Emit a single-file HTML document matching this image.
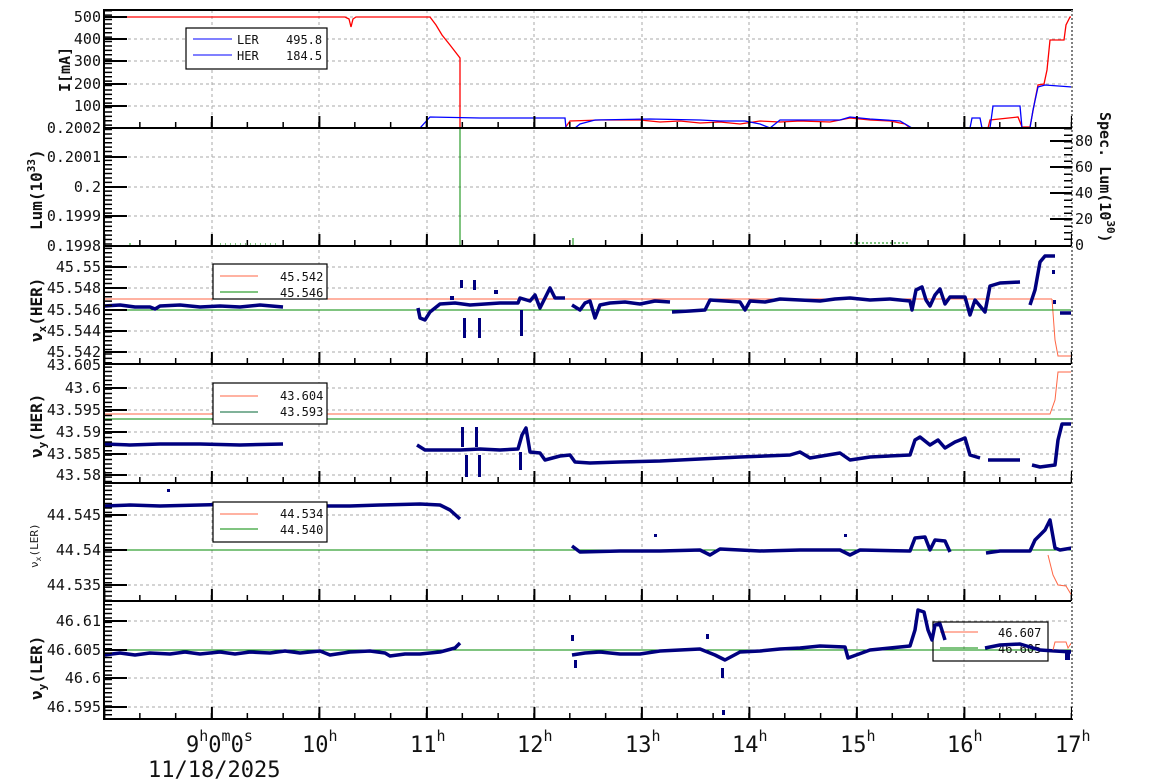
<!DOCTYPE html>
<html><head><meta charset="utf-8"><style>
html,body{margin:0;padding:0;background:#fff}
svg{display:block;font-family:"DejaVu Sans Mono","Liberation Mono",monospace}
.t{font-size:15px;fill:#111}
.b{font-weight:bold}
</style></head><body>
<svg width="1154" height="782" viewBox="0 0 1154 782" xmlns="http://www.w3.org/2000/svg">
<rect width="1154" height="782" fill="#fff"/>
<g stroke="#aaa" stroke-width="1" stroke-dasharray="3 3">
<line x1="212" y1="10" x2="212" y2="719"/><line x1="319" y1="10" x2="319" y2="719"/>
<line x1="427" y1="10" x2="427" y2="719"/><line x1="534" y1="10" x2="534" y2="719"/>
<line x1="642" y1="10" x2="642" y2="719"/><line x1="749" y1="10" x2="749" y2="719"/>
<line x1="857" y1="10" x2="857" y2="719"/><line x1="964" y1="10" x2="964" y2="719"/>
<line x1="104" y1="17" x2="1072" y2="17"/><line x1="104" y1="39" x2="1072" y2="39"/><line x1="104" y1="61" x2="1072" y2="61"/><line x1="104" y1="84" x2="1072" y2="84"/><line x1="104" y1="106" x2="1072" y2="106"/>
<line x1="104" y1="157" x2="1072" y2="157"/><line x1="104" y1="187" x2="1072" y2="187"/><line x1="104" y1="216" x2="1072" y2="216"/>
<line x1="104" y1="267" x2="1072" y2="267"/><line x1="104" y1="288" x2="1072" y2="288"/><line x1="104" y1="331" x2="1072" y2="331"/><line x1="104" y1="352" x2="1072" y2="352"/>
<line x1="104" y1="388" x2="1072" y2="388"/><line x1="104" y1="410" x2="1072" y2="410"/><line x1="104" y1="432" x2="1072" y2="432"/><line x1="104" y1="454" x2="1072" y2="454"/><line x1="104" y1="475" x2="1072" y2="475"/>
<line x1="104" y1="515" x2="1072" y2="515"/><line x1="104" y1="585" x2="1072" y2="585"/>
<line x1="104" y1="621" x2="1072" y2="621"/><line x1="104" y1="678" x2="1072" y2="678"/><line x1="104" y1="707" x2="1072" y2="707"/>
</g>

<!-- Panel 1 currents -->
<polyline fill="none" stroke="#f00" stroke-width="1.3" points="104,17 345,17 349,19 351,27 353,19 356,17 430,17 436,25 442,35 450,45 460,58 460,128 565,128 570,121 600,120 640,120 660,122 680,121 700,123 720,122 740,124 760,121 780,122 800,121 830,122 850,118 870,120 890,121 905,124 910,128 988,128 990,120 1018,117 1022,127 1030,127 1035,100 1038,85 1044,84 1047,70 1050,40 1064,40 1066,25 1070,17 1072,17"/>
<polyline fill="none" stroke="#00f" stroke-width="1.3" points="104,128 420,128 430,117 480,118 520,118 565,118 566,128 575,128 580,124 595,120 650,119 700,120 720,121 745,121 760,124 770,128 780,120 840,120 850,117 870,119 900,121 912,128 970,128 972,118 980,118 982,128 990,128 993,106 1020,106 1022,128 1030,128 1033,110 1038,87 1045,85 1072,87"/>
<rect x="186" y="28" width="141" height="41" fill="#fff" stroke="#000" stroke-width="1.2"/>
<line x1="193" y1="39" x2="232" y2="39" stroke="#00f"/><line x1="193" y1="55" x2="232" y2="55" stroke="#00f"/>
<text x="237" y="44" font-size="12" fill="#111">LER</text><text x="286" y="44" font-size="12" fill="#111">495.8</text>
<text x="237" y="60" font-size="12" fill="#111">HER</text><text x="286" y="60" font-size="12" fill="#111">184.5</text>

<!-- Panel 2 -->
<line x1="460" y1="128" x2="460" y2="246" stroke="#080" stroke-width="1"/>
<g stroke="#080" stroke-width="1"><line x1="130" y1="243" x2="130" y2="246"/><line x1="573" y1="238" x2="573" y2="246"/><line x1="850" y1="243" x2="910" y2="243" stroke-dasharray="2 2"/><line x1="220" y1="244" x2="280" y2="244" stroke-dasharray="1 4"/></g>

<!-- Panel 3 -->
<line x1="104" y1="299" x2="1052" y2="299" stroke="#f64" stroke-width="1"/>
<polyline fill="none" stroke="#f64" stroke-width="1" points="1052,299 1055,340 1058,356 1072,356"/>
<line x1="104" y1="310" x2="1072" y2="310" stroke="#080" stroke-width="1"/>
<g fill="none" stroke="#00007f" stroke-width="3.5" stroke-linejoin="round">
<polyline points="104,306 120,305 135,307 150,307 155,309 160,306 180,305 200,307 220,306 240,307 260,305 283,307"/>
<polyline points="418,308 420,318 425,320 430,312 440,304 455,303 470,305 485,304 500,303 518,303 520,298 530,301 535,295 540,308 545,298 550,288 555,298 565,298"/>
<polyline points="572,305 580,310 585,303 590,301 595,318 600,305 610,303 625,302 640,304 655,301 670,302"/>
<polyline points="672,312 690,311 705,310 710,300 725,301 740,302 745,310 750,301 765,302 780,299 800,300 820,301 835,299 850,298 870,300 890,299 910,301 912,310 916,290 922,287 926,300 930,306 935,295 940,289 945,304 950,297 965,297 970,315 975,300 985,312 990,286 1000,283 1020,282"/>
<polyline points="1030,305 1035,290 1040,262 1045,256 1055,256"/>
<polyline points="1060,313 1072,313"/>
</g>
<g fill="#00007f"><rect x="460" y="280" width="3" height="8"/><rect x="473" y="280" width="3" height="10"/><rect x="478" y="318" width="3" height="20"/><rect x="463" y="318" width="3" height="20"/><rect x="450" y="296" width="4" height="4"/><rect x="494" y="290" width="4" height="4"/><rect x="520" y="310" width="3" height="26"/><rect x="1052" y="270" width="3" height="4"/><rect x="1053" y="300" width="3" height="4"/></g>
<rect x="213" y="264" width="114" height="35" fill="#fff" stroke="#000" stroke-width="1.2"/>
<line x1="220" y1="276" x2="258" y2="276" stroke="#f64"/><line x1="220" y1="292" x2="258" y2="292" stroke="#080"/>
<text x="280" y="281" font-size="12" fill="#111">45.542</text><text x="280" y="297" font-size="12" fill="#111">45.546</text>

<!-- Panel 4 -->
<polyline fill="none" stroke="#f64" stroke-width="1" points="104,414 1050,414 1055,400 1058,372 1072,372"/>
<line x1="104" y1="419" x2="1072" y2="419" stroke="#080" stroke-width="1"/>
<g fill="none" stroke="#00007f" stroke-width="3.5" stroke-linejoin="round">
<polyline points="104,444 130,445 160,444 200,444 240,445 283,444"/>
<polyline points="417,445 425,450 445,450 460,450 480,449 500,450 518,449 522,435 526,428 530,452 540,453 545,460 560,456 570,455 575,462 590,463 620,462 660,461 700,459 740,457 790,455 800,452 810,458 840,453 850,460 870,457 910,455 915,440 920,437 930,445 938,440 945,448 955,442 965,438 970,455 980,458"/>
<polyline points="988,460 1020,460"/>
<polyline points="1032,465 1040,467 1055,465 1058,440 1062,424 1072,424"/>
</g>
<g fill="#00007f"><rect x="461" y="427" width="3" height="20"/><rect x="475" y="427" width="3" height="20"/><rect x="465" y="455" width="3" height="22"/><rect x="478" y="455" width="3" height="22"/><rect x="519" y="452" width="3" height="18"/></g>
<rect x="213" y="383" width="114" height="41" fill="#fff" stroke="#000" stroke-width="1.2"/>
<line x1="220" y1="396" x2="258" y2="396" stroke="#f64"/><line x1="220" y1="412" x2="258" y2="412" stroke="#063"/>
<text x="280" y="400" font-size="12" fill="#111">43.604</text><text x="280" y="416" font-size="12" fill="#111">43.593</text>

<!-- Panel 5 -->
<line x1="104" y1="550" x2="1072" y2="550" stroke="#080" stroke-width="1"/>
<polyline fill="none" stroke="#f64" stroke-width="1" points="1048,555 1053,575 1058,585 1066,586 1072,596"/>
<g fill="none" stroke="#00007f" stroke-width="3.5" stroke-linejoin="round">
<polyline points="104,506 130,505 160,506 200,505 240,504 280,505 300,505 320,506 350,506 380,505 420,504 440,505 450,510 460,519"/>
<polyline points="572,546 580,552 620,551 660,551 700,550 710,555 720,549 760,551 800,550 840,550 850,555 860,550 910,551 915,538 925,537 930,550 935,540 945,541 950,552"/>
<polyline points="986,553 1000,551 1030,551 1035,540 1045,530 1050,520 1055,548 1060,550 1072,548"/>
</g>
<rect x="167" y="489" width="3" height="3" fill="#00007f"/><rect x="654" y="534" width="3" height="3" fill="#00007f"/><rect x="844" y="534" width="3" height="3" fill="#00007f"/>
<rect x="213" y="502" width="114" height="40" fill="#fff" stroke="#000" stroke-width="1.2"/>
<line x1="220" y1="514" x2="258" y2="514" stroke="#f64"/><line x1="220" y1="529" x2="258" y2="529" stroke="#080"/>
<text x="280" y="518" font-size="12" fill="#111">44.534</text><text x="280" y="534" font-size="12" fill="#111">44.540</text>

<!-- Panel 6 -->
<line x1="104" y1="650" x2="1072" y2="650" stroke="#080" stroke-width="1"/>
<rect x="933" y="622" width="115" height="39" fill="none" stroke="#000" stroke-width="1.2"/>
<line x1="940" y1="632" x2="978" y2="632" stroke="#f64"/><line x1="940" y1="648" x2="978" y2="648" stroke="#080"/>
<text x="998" y="637" font-size="12" fill="#111">46.607</text><text x="998" y="653" font-size="12" fill="#111">46.605</text>
<g fill="none" stroke="#00007f" stroke-width="3.5" stroke-linejoin="round">
<polyline points="104,655 120,653 135,655 150,653 170,654 185,652 200,654 220,652 235,654 250,652 270,653 285,651 300,653 320,651 330,655 350,652 370,651 385,653 390,656 405,654 420,654 440,652 455,648 460,643"/>
<polyline points="572,655 585,653 600,652 620,654 640,654 660,651 680,650 700,649 715,655 725,660 740,652 760,651 780,649 800,648 820,646 845,647 848,658 870,650 890,648 910,646 915,630 918,610 924,612 928,630 932,640 935,625 940,624 945,640"/>
<polyline points="985,648 1000,645 1020,644 1040,650 1055,651 1072,652"/>
</g>
<g fill="#00007f"><rect x="571" y="635" width="3" height="6"/><rect x="574" y="660" width="3" height="8"/><rect x="706" y="634" width="3" height="5"/><rect x="721" y="668" width="3" height="10"/><rect x="722" y="710" width="3" height="5"/><rect x="1065" y="650" width="5" height="10"/></g>
<polyline fill="none" stroke="#f64" stroke-width="1" points="1053,650 1055,642 1066,642 1068,648 1072,642"/>

<g stroke="#000" stroke-width="2" fill="none">
<rect x="104" y="10" width="968" height="709"/>
<line x1="104" y1="128" x2="1072" y2="128"/><line x1="104" y1="246" x2="1072" y2="246"/>
<line x1="104" y1="364" x2="1072" y2="364"/><line x1="104" y1="483" x2="1072" y2="483"/>
<line x1="104" y1="601" x2="1072" y2="601"/>
</g>
<line x1="1072" y1="10" x2="1072" y2="719" stroke="#fff" stroke-width="2"/>
<line x1="1072" y1="10" x2="1072" y2="719" stroke="#000" stroke-width="1" stroke-dasharray="2 2"/>

<g stroke="#000" stroke-width="1.5">
<g stroke-dasharray="1.5 34.33" stroke-dashoffset="-35.1">
<line x1="104" y1="125" x2="1072" y2="125" stroke-width="6"/>
<line x1="104" y1="243" x2="1072" y2="243" stroke-width="6"/>
<line x1="104" y1="361" x2="1072" y2="361" stroke-width="6"/>
<line x1="104" y1="480" x2="1072" y2="480" stroke-width="6"/>
<line x1="104" y1="598" x2="1072" y2="598" stroke-width="6"/>
<line x1="104" y1="716" x2="1072" y2="716" stroke-width="6"/>
</g>
<g stroke-dasharray="2 105.5" stroke-dashoffset="-106.9">
<line x1="104" y1="122" x2="1072" y2="122" stroke-width="12"/>
<line x1="104" y1="240" x2="1072" y2="240" stroke-width="12"/>
<line x1="104" y1="358" x2="1072" y2="358" stroke-width="12"/>
<line x1="104" y1="477" x2="1072" y2="477" stroke-width="12"/>
<line x1="104" y1="595" x2="1072" y2="595" stroke-width="12"/>
<line x1="104" y1="713" x2="1072" y2="713" stroke-width="12"/>
</g>
</g>
<line x1="108" y1="10" x2="108" y2="719" stroke="#000" stroke-width="8" stroke-dasharray="1.5 2.9"/>
<g stroke="#000" stroke-width="2">
<line x1="104" y1="17" x2="127" y2="17"/><line x1="104" y1="39" x2="127" y2="39"/><line x1="104" y1="61" x2="127" y2="61"/><line x1="104" y1="84" x2="127" y2="84"/><line x1="104" y1="106" x2="127" y2="106"/>
<line x1="104" y1="157" x2="127" y2="157"/><line x1="104" y1="187" x2="127" y2="187"/><line x1="104" y1="216" x2="127" y2="216"/>
<line x1="104" y1="267" x2="127" y2="267"/><line x1="104" y1="288" x2="127" y2="288"/><line x1="104" y1="310" x2="127" y2="310"/><line x1="104" y1="331" x2="127" y2="331"/><line x1="104" y1="352" x2="127" y2="352"/>
<line x1="104" y1="388" x2="127" y2="388"/><line x1="104" y1="410" x2="127" y2="410"/><line x1="104" y1="432" x2="127" y2="432"/><line x1="104" y1="454" x2="127" y2="454"/><line x1="104" y1="475" x2="127" y2="475"/>
<line x1="104" y1="515" x2="127" y2="515"/><line x1="104" y1="550" x2="127" y2="550"/><line x1="104" y1="585" x2="127" y2="585"/>
<line x1="104" y1="621" x2="127" y2="621"/><line x1="104" y1="650" x2="127" y2="650"/><line x1="104" y1="678" x2="127" y2="678"/><line x1="104" y1="707" x2="127" y2="707"/>
<line x1="1050" y1="141" x2="1072" y2="141"/><line x1="1050" y1="167" x2="1072" y2="167"/><line x1="1050" y1="193" x2="1072" y2="193"/><line x1="1050" y1="219" x2="1072" y2="219"/>
</g>
<line x1="1068" y1="128" x2="1068" y2="246" stroke="#000" stroke-width="8" stroke-dasharray="1.5 5"/>

<g class="t" text-anchor="end">
<text x="101" y="22">500</text><text x="101" y="44">400</text><text x="101" y="66">300</text><text x="101" y="89">200</text><text x="101" y="111">100</text>
<text x="101" y="133">0.2002</text><text x="101" y="162">0.2001</text><text x="101" y="192">0.2</text><text x="101" y="221">0.1999</text><text x="101" y="251">0.1998</text>
<text x="101" y="272">45.55</text><text x="101" y="293">45.548</text><text x="101" y="315">45.546</text><text x="101" y="336">45.544</text><text x="101" y="357">45.542</text>
<text x="101" y="370">43.605</text><text x="101" y="393">43.6</text><text x="101" y="415">43.595</text><text x="101" y="437">43.59</text><text x="101" y="459">43.585</text><text x="101" y="480">43.58</text>
<text x="101" y="520">44.545</text><text x="101" y="555">44.54</text><text x="101" y="590">44.535</text>
<text x="101" y="626">46.61</text><text x="101" y="655">46.605</text><text x="101" y="683">46.6</text><text x="101" y="712">46.595</text>
</g>
<g class="t"><text x="1075" y="146">80</text><text x="1075" y="172">60</text><text x="1075" y="198">40</text><text x="1075" y="224">20</text><text x="1075" y="250">0</text></g>

<g class="t b">
<text transform="translate(70,92) rotate(-90)" font-size="15">I[mA]</text>
<text transform="translate(42,230) rotate(-90)" font-size="16">Lum(10<tspan font-size="11" dy="-7">33</tspan><tspan dy="7">)</tspan></text>
<text transform="translate(42,342) rotate(-90)" font-size="16">ν<tspan font-size="11" dy="4">x</tspan><tspan dy="-4">(HER)</tspan></text>
<text transform="translate(42,458) rotate(-90)" font-size="16">ν<tspan font-size="11" dy="4">y</tspan><tspan dy="-4">(HER)</tspan></text>
<text transform="translate(42,700) rotate(-90)" font-size="16">ν<tspan font-size="11" dy="4">y</tspan><tspan dy="-4">(LER)</tspan></text>
<text transform="translate(1100,112) rotate(90)" font-size="15">Spec. Lum(10<tspan font-size="11" dy="-7">30</tspan><tspan dy="7">)</tspan></text>
</g>
<text transform="translate(38,568) rotate(-90)" font-size="11" fill="#222" font-family="DejaVu Sans Mono,monospace">ν<tspan font-size="8" dy="3">x</tspan><tspan dy="-3">(LER)</tspan></text>

<g font-size="22" fill="#111" font-family="DejaVu Sans Mono,monospace">
<text x="186" y="752">9<tspan font-size="15" dy="-11">h</tspan><tspan dy="11">0</tspan><tspan font-size="15" dy="-11">m</tspan><tspan dy="11">0</tspan><tspan font-size="15" dy="-11">s</tspan></text>
<text x="302" y="752">10<tspan font-size="15" dy="-11">h</tspan></text>
<text x="410" y="752">11<tspan font-size="15" dy="-11">h</tspan></text>
<text x="517" y="752">12<tspan font-size="15" dy="-11">h</tspan></text>
<text x="625" y="752">13<tspan font-size="15" dy="-11">h</tspan></text>
<text x="732" y="752">14<tspan font-size="15" dy="-11">h</tspan></text>
<text x="840" y="752">15<tspan font-size="15" dy="-11">h</tspan></text>
<text x="947" y="752">16<tspan font-size="15" dy="-11">h</tspan></text>
<text x="1055" y="752">17<tspan font-size="15" dy="-11">h</tspan></text>
<text x="148" y="777">11/18/2025</text>
</g>
</svg>
</body></html>
